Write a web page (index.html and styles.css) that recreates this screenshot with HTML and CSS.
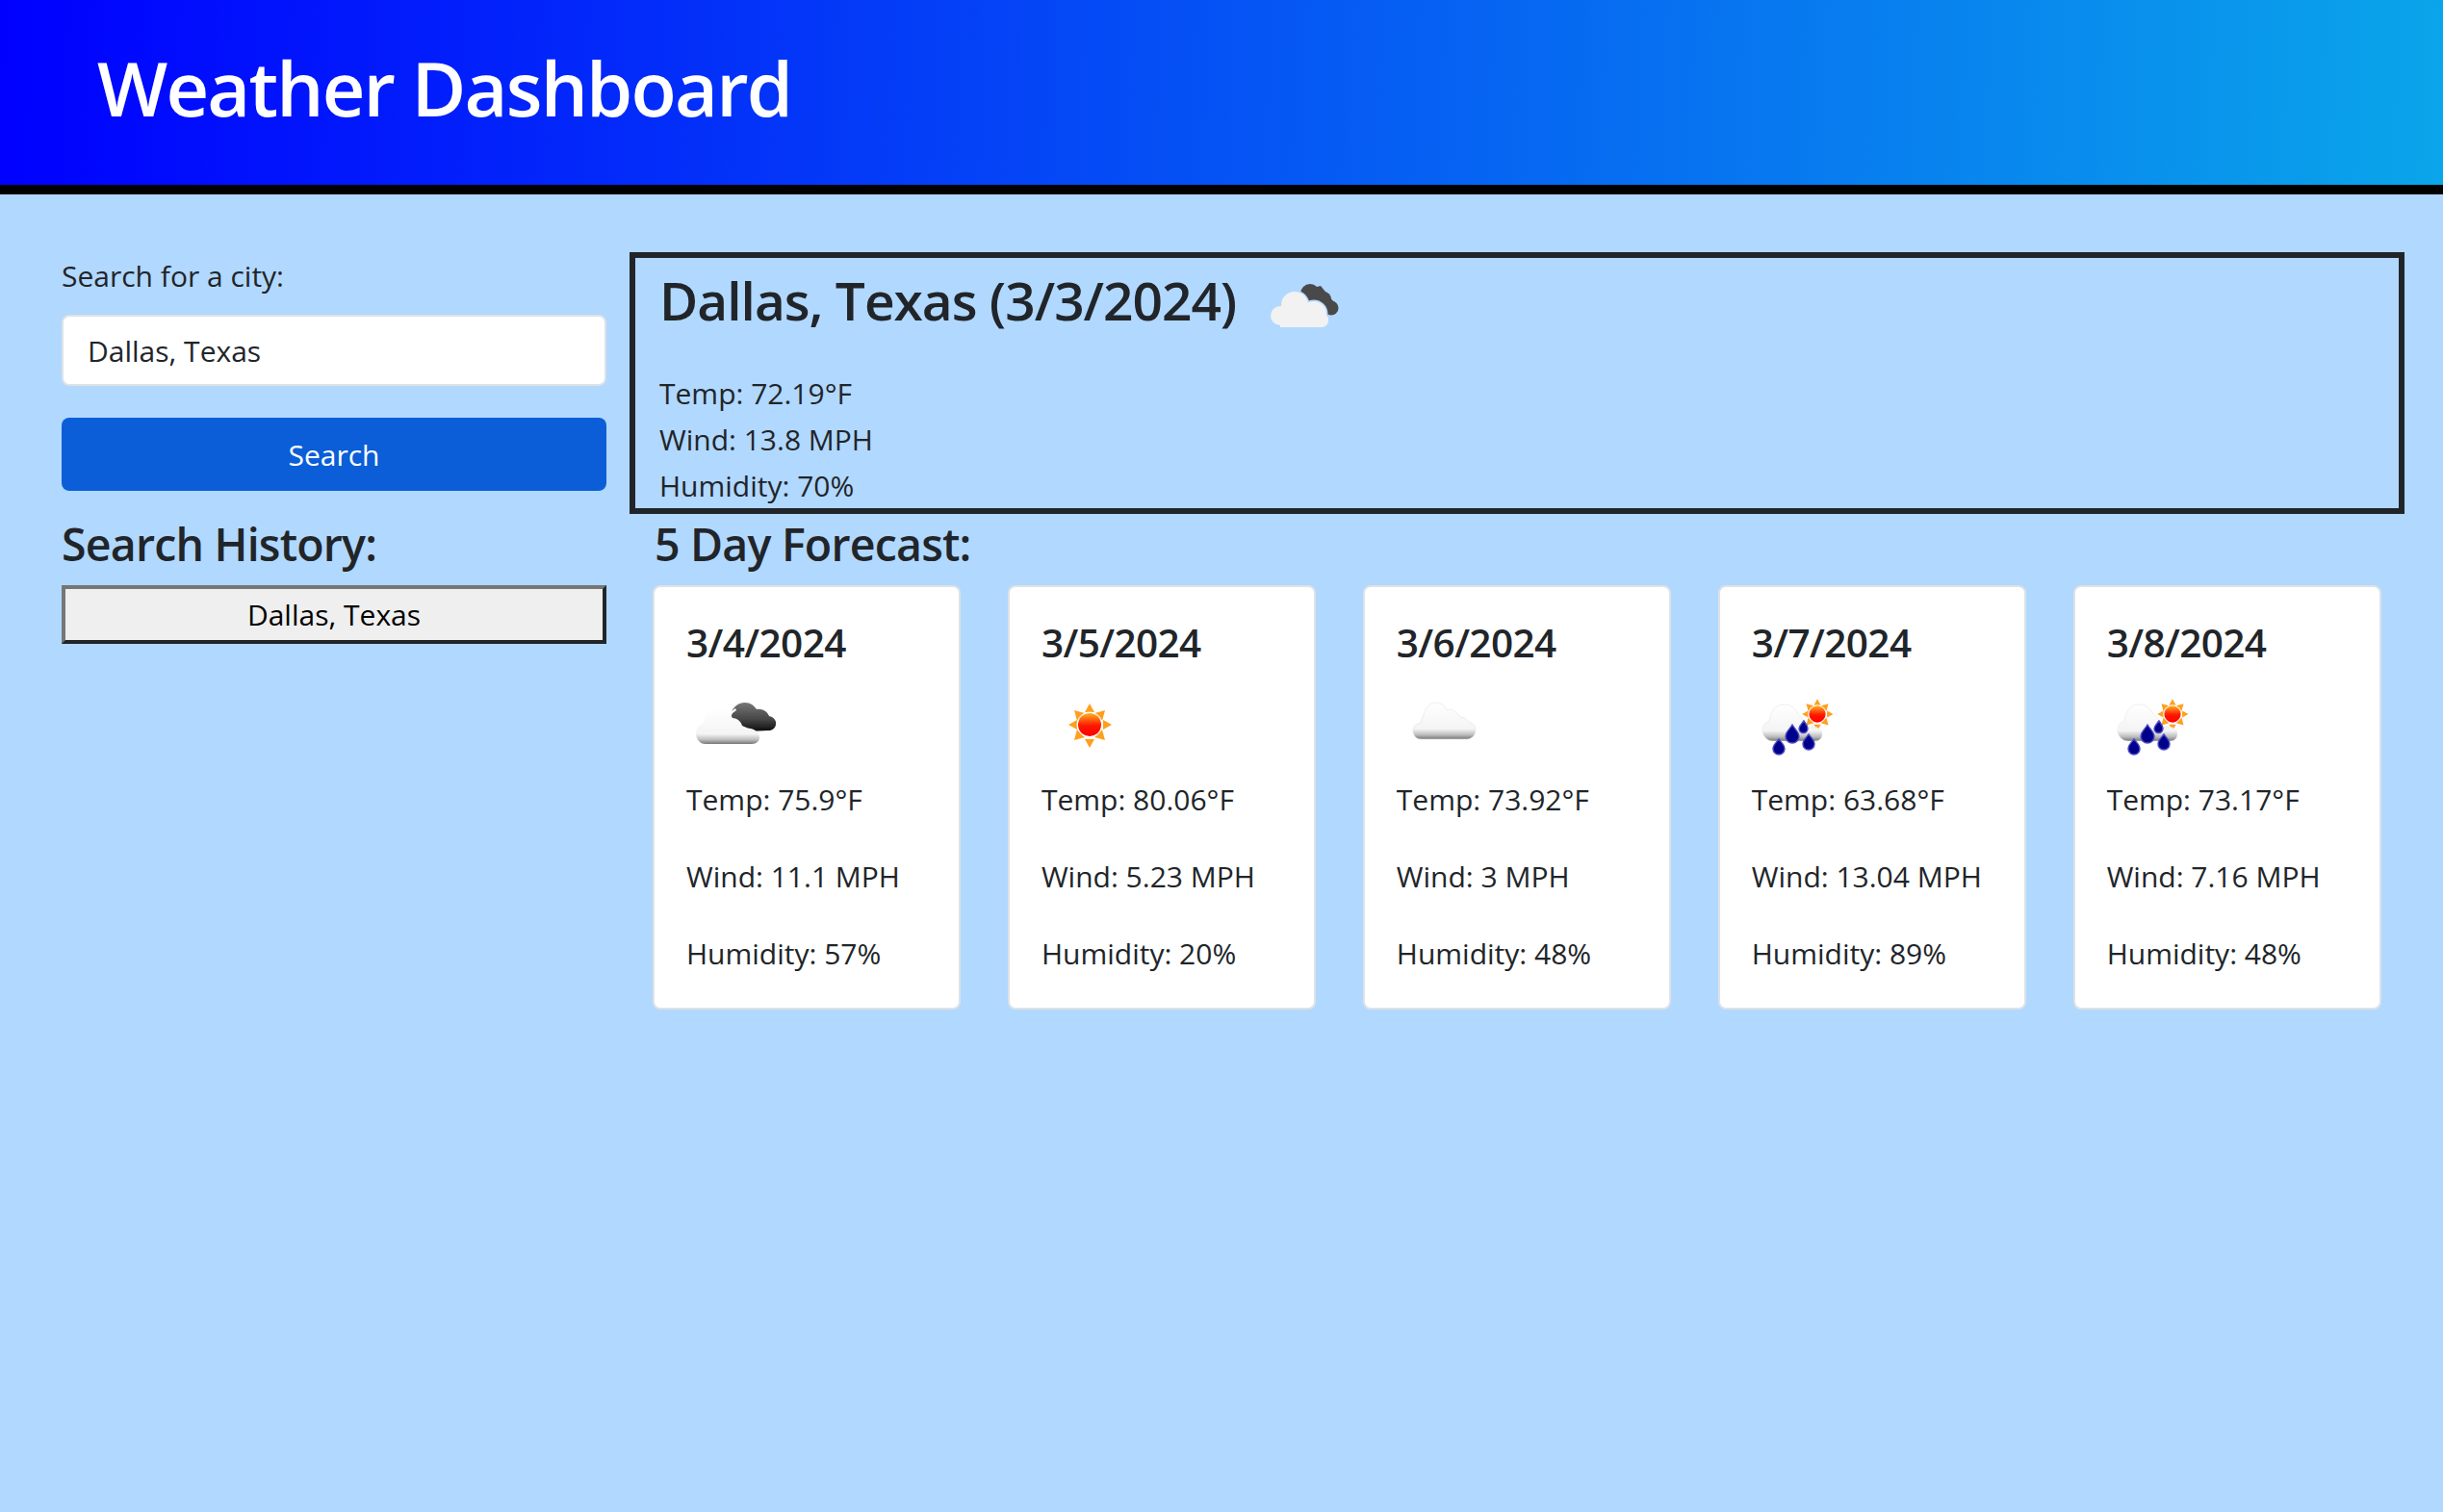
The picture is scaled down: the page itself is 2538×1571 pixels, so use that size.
FILE: index.html
```html
<!DOCTYPE html>
<html lang="en">
<head>
    <meta charset="UTF-8">
    <meta name="viewport" content="width=device-width, initial-scale=1.0">
    <title>Weather Dashboard</title>
    <link rel="stylesheet" href="styles.css">
</head>
<body>
    <svg class="defs" width="0" height="0">
        <defs>
            <linearGradient id="cloudFill" x1="0" y1="0" x2="0" y2="1">
                <stop offset="0" stop-color="#ffffff"/>
                <stop offset="0.72" stop-color="#f4f4f4"/>
                <stop offset="0.88" stop-color="#bdbdbd"/>
                <stop offset="1" stop-color="#777777"/>
            </linearGradient>
            <linearGradient id="darkFill" x1="0" y1="0" x2="0" y2="1">
                <stop offset="0" stop-color="#777777"/>
                <stop offset="0.6" stop-color="#444444"/>
                <stop offset="1" stop-color="#0c0c0c"/>
            </linearGradient>
            <linearGradient id="sunFill" x1="0" y1="0" x2="0" y2="1">
                <stop offset="0" stop-color="#ffb020"/>
                <stop offset="0.55" stop-color="#ff1500"/>
                <stop offset="1" stop-color="#ff0000"/>
            </linearGradient>
            <filter id="soft" x="-10%" y="-10%" width="120%" height="120%">
                <feGaussianBlur stdDeviation="0.7"/>
            </filter>
            <symbol id="sunRays" viewBox="0 0 100 100">
                <g fill="#ff9f1c" filter="url(#soft)">
                    <path d="M52 31l5 9h-10z"/>
                    <path d="M52 77l5-9h-10z"/>
                    <path d="M30 53l9-5v10z"/>
                    <path d="M75 53l-9-5v10z"/>
                    <path d="M36 38l11 3-8 8z"/>
                    <path d="M68 38l-11 3 8 8z"/>
                    <path d="M36 69l3-11 8 8z"/>
                    <path d="M68 69l-3-11-8 8z"/>
                </g>
                <circle cx="52" cy="53" r="13.5" fill="#ffffff" opacity="0.75"/>
                <circle cx="52" cy="53" r="12" fill="url(#sunFill)"/>
            </symbol>
            <symbol id="rainSun" viewBox="20 0 100 100">
                <g filter="url(#soft)">
                    <use href="#sunRays" transform="translate(88 42) scale(0.72) translate(-52 -53)" width="100" height="100"/>
                    <path fill="url(#cloudFill)" stroke="#e6e6e6" stroke-width="0.6" d="M42 70c-6 0-11-5-11-11 0-5 3-9 7-10 1-9 6-17 15-17 7 0 12 3 15 10 2 1 5 5 7 9 2 4 4 5 6 4 6-1 12 3 12 8 0 4-3 7-7 7z"/>
                    <g fill="#00008b" stroke="#4a4ac4" stroke-width="1.4">
                        <path d="M48 68c3 4 6 6 6 10a6 6 0 0 1-12 0c0-4 3-6 6-10z"/>
                        <path d="M62 53c3 5 7 8 7 12a7 7 0 0 1-14 0c0-4 4-7 7-12z"/>
                        <path d="M79 63c3 4 6 6 6 10a6 6 0 0 1-12 0c0-4 3-6 6-10z"/>
                        <path d="M74 49c2 3 4 5 4 8a4.500 4.500 0 0 1-9 0c0-3 3-5 5-8z"/>
                    </g>
                </g>
            </symbol>
        </defs>
    </svg>

    <header class="page-header">
        <h1>Weather Dashboard</h1>
    </header>

    <main class="layout">
        <aside class="sidebar">
            <form class="search-form">
                <label for="cityInput">Search for a city:</label>
                <input type="text" id="cityInput" value="Dallas, Texas">
                <button type="button" class="search-btn">Search</button>
            </form>
            <h3>Search History:</h3>
            <button type="button" class="history-btn">Dallas, Texas</button>
        </aside>

        <section class="content">
            <div class="current">
                <div class="current-title">
                    <h2>Dallas, Texas (3/3/2024)</h2>
                    <svg class="current-icon" viewBox="33 60 80 55" aria-hidden="true">
                        <g filter="url(#soft)">
                            <g fill="#4a4a4a">
                                <circle cx="81" cy="75" r="10"/>
                                <circle cx="95" cy="81" r="8"/>
                                <circle cx="103" cy="90" r="7.500"/>
                                <path d="M72 72l20-5 18 22-6 8-22-6z"/>
                            </g>
                            <g fill="#b1d8ff" stroke="#b1d8ff" stroke-width="3">
                                <circle cx="65" cy="87" r="14"/>
                                <circle cx="85" cy="96" r="13"/>
                            </g>
                            <g fill="#f2f2f2">
                                <circle cx="50" cy="98" r="10"/>
                                <circle cx="65" cy="87" r="14"/>
                                <circle cx="85" cy="96" r="13"/>
                                <path d="M50 88h40l10 12v3c0 4-3 7-7 7H50z"/>
                            </g>
                        </g>
                    </svg>
                </div>
                <p>Temp: 72.19°F</p>
                <p>Wind: 13.8 MPH</p>
                <p>Humidity: 70%</p>
            </div>

            <h3 class="forecast-heading">5 Day Forecast:</h3>
            <div class="forecast">
                <div class="card">
                    <h4>3/4/2024</h4>
                    <svg class="icon" viewBox="13 0 100 100" aria-hidden="true">
                        <g filter="url(#soft)">
                            <path fill="url(#darkFill)" d="M59 44c1-8 7-14 15-14 6 0 9 3 12 7 6-1 11 2 13 7 5 1 8 5 7 9-1 4-4 6-8 6l-22 1-13-8z"/>
                            <path fill="#ffffff" d="M59 45l-2-1 3-5 4-3 1 2-4 3z"/>
                            <path fill="url(#cloudFill)" d="M33 73c-6 0-10-5-10-11 0-5 3-9 8-11 1-8 6-15 15-15 7 0 12 4 15 10 5 0 9 4 10 8 4 2 7 3 9 3 5 1 9 5 9 9 0 4-3 7-8 7z"/>
                        </g>
                    </svg>
                    <p>Temp: 75.9°F</p>
                    <p>Wind: 11.1 MPH</p>
                    <p>Humidity: 57%</p>
                </div>
                <div class="card">
                    <h4>3/5/2024</h4>
                    <svg class="icon" viewBox="2 0 100 100" aria-hidden="true">
                        <use href="#sunRays" width="100" height="100"/>
                    </svg>
                    <p>Temp: 80.06°F</p>
                    <p>Wind: 5.23 MPH</p>
                    <p>Humidity: 20%</p>
                </div>
                <div class="card">
                    <h4>3/6/2024</h4>
                    <svg class="icon" viewBox="11 0 100 100" aria-hidden="true">
                        <g filter="url(#soft)">
                            <path fill="url(#cloudFill)" stroke="#e2e2e2" stroke-width="0.6" d="M36 68c-5 0-8-4-8-9 0-4 3-7 8-8 0-3 2-6 3-9 2-6 6-12 12-12 6 0 10 3 12 8 3-1 6-1 8 1 2 2 4 3 6 6 4 0 7 2 9 5 3 1 7 3 7 8 0 6-4 10-9 10z"/>
                        </g>
                    </svg>
                    <p>Temp: 73.92°F</p>
                    <p>Wind: 3 MPH</p>
                    <p>Humidity: 48%</p>
                </div>
                <div class="card">
                    <h4>3/7/2024</h4>
                    <svg class="icon" viewBox="0 0 100 100" aria-hidden="true">
                        <use href="#rainSun" width="100" height="100"/>
                    </svg>
                    <p>Temp: 63.68°F</p>
                    <p>Wind: 13.04 MPH</p>
                    <p>Humidity: 89%</p>
                </div>
                <div class="card">
                    <h4>3/8/2024</h4>
                    <svg class="icon" viewBox="0 0 100 100" aria-hidden="true">
                        <use href="#rainSun" width="100" height="100"/>
                    </svg>
                    <p>Temp: 73.17°F</p>
                    <p>Wind: 7.16 MPH</p>
                    <p>Humidity: 48%</p>
                </div>
            </div>
        </section>
    </main>
</body>
</html>
```

FILE: styles.css
```css
* {
    box-sizing: border-box;
}
body {
    font-family: "Open Sans", "Noto Sans", sans-serif;
    font-size: 30px;
    line-height: 48px;
    color: #212529;
    background-color: #b1d8ff;
    margin: 0;
    min-height: 1571px;
}
.defs {
    position: absolute;
}
h1, h2, h3, h4, p {
    margin: 0;
}
.page-header {
    height: 202px;
    padding: 0 0 10px 101px;
    display: flex;
    align-items: center;
    background: linear-gradient(92deg, #0000ff, #0aa5ea);
    border-bottom: 10px solid #000;
}
.page-header h1 {
    color: #fff;
    font-size: 77.5px;
    font-weight: 600;
    line-height: 96px;
    letter-spacing: -1.8px;
}
.layout {
    display: flex;
    gap: 24px;
    padding: 60px 40px 0 64px;
}
.sidebar {
    width: 566px;
    flex: none;
}
.search-form label {
    display: block;
    margin: 1px 0 16px;
}
.search-form input {
    display: block;
    width: 100%;
    height: 74px;
    padding: 0 25px;
    font: inherit;
    color: #212529;
    background: #fff;
    border: 2px solid #dee2e6;
    border-radius: 8px;
}
.search-btn {
    display: block;
    width: 100%;
    height: 76px;
    margin-top: 33px;
    padding: 2px 0 0;
    font: inherit;
    color: #fff;
    background-color: #0b5ed7;
    border: 0;
    border-radius: 8px;
}
h3 {
    font-size: 46.5px;
    font-weight: 600;
    line-height: 60px;
    letter-spacing: -0.8px;
}
.sidebar h3 {
    margin-top: 25px;
}
.history-btn {
    display: block;
    width: 100%;
    height: 61px;
    margin-top: 13px;
    padding: 0;
    font: inherit;
    color: #000;
    background-color: #efefef;
    border-width: 4px;
    border-style: solid;
    border-color: #767676 #212529 #212529 #767676;
}
.content {
    flex: 1;
}
.current {
    height: 272px;
    padding: 0 25px;
    border: 6px solid #212529;
}
.current-title {
    display: flex;
    align-items: flex-start;
    height: 117px;
    padding: 5px 0 0;
}
.current-title h2 {
    font-size: 55px;
    font-weight: 600;
    line-height: 78px;
    letter-spacing: -1px;
}
.current-icon {
    width: 80px;
    height: 55px;
    margin: 17px 0 0 29px;
}
.forecast-heading {
    margin: 1px 0 0 26px;
}
.forecast {
    display: flex;
    gap: 48.5px;
    margin: 13px 24px 0;
}
.card {
    flex: 1;
    height: 441px;
    padding: 34px 33px;
    background: #fff;
    border: 2px solid #dee2e6;
    border-radius: 8px;
}
.card h4 {
    font-size: 40.5px;
    font-weight: 600;
    line-height: 48px;
    letter-spacing: -0.6px;
}
.icon {
    display: block;
    width: 100px;
    height: 100px;
    margin: 8px 0 7px;
}
.card p {
    margin-bottom: 32px;
}
.card p:last-child {
    margin-bottom: 0;
}
```
